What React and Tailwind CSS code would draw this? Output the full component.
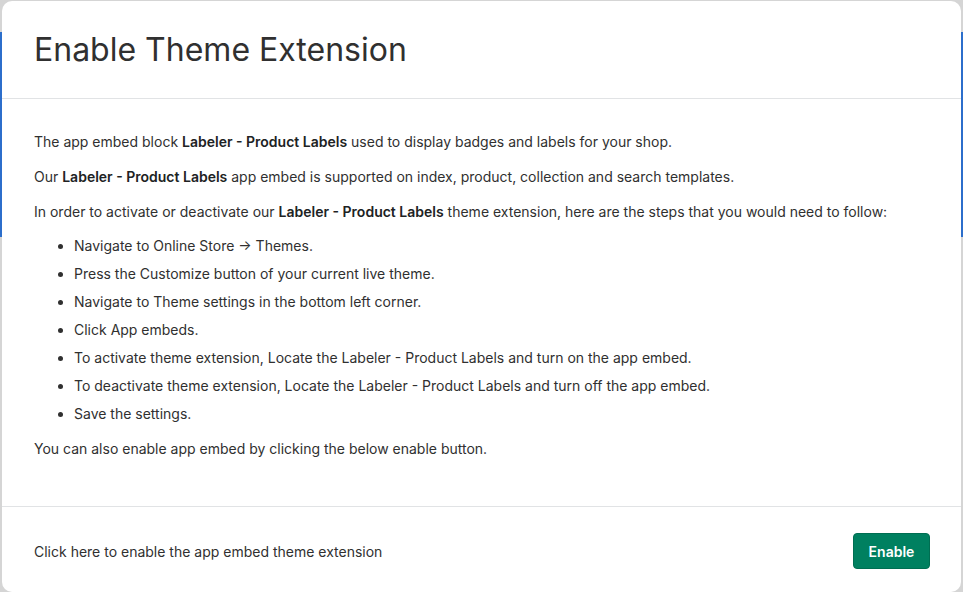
export default function App() {
  const B = ({ children }) => <span className="font-semibold text-[#202223]">{children}</span>;
  const items = [
    "Navigate to Online Store \u2192 Themes.",
    "Press the Customize button of your current live theme.",
    "Navigate to Theme settings in the bottom left corner.",
    "Click App embeds.",
    "To activate theme extension, Locate the Labeler - Product Labels and turn on the app embed.",
    "To deactivate theme extension, Locate the Labeler - Product Labels and turn off the app embed.",
    "Save the settings.",
  ];
  return (
    <div
      className="relative w-[963px] h-[592px] overflow-hidden bg-[#d5d5d5]"
      style={{ fontFamily: "Inter, 'Noto Sans', sans-serif" }}
    >
      <div className="absolute left-0 top-[32px] w-[3px] h-[205px] bg-[#2c6ecb]" />
      <div className="absolute right-0 top-[32px] w-[3px] h-[205px] bg-[#2c6ecb]" />
      <div className="absolute left-[2px] top-[1px] w-[959px] h-[591px] bg-white rounded-[10px] flex flex-col">
        <div className="h-[98px] shrink-0 border-b border-[#e1e3e5] flex items-center pl-[32px]">
          <h1 className="text-[32px] leading-[38px] font-normal text-[#303030]">
            Enable Theme Extension
          </h1>
        </div>
        <div className="flex-1 px-[32px] pt-[33px] text-[14px] leading-[20px] text-[#303030]">
          <p className="mb-[15px]">
            The app embed block <B>Labeler - Product Labels</B> used to display badges and labels for your shop.
          </p>
          <p className="mb-[15px]">
            Our <B>Labeler - Product Labels</B> app embed is supported on index, product, collection and search templates.
          </p>
          <p className="mb-[14px]">
            In order to activate or deactivate our <B>Labeler - Product Labels</B> theme extension, here are the steps that you would need to follow:
          </p>
          <ul className="list-disc pl-[40px] flex flex-col gap-[8px] mb-[15px]">
            {items.map((t) => (
              <li key={t}>{t}</li>
            ))}
          </ul>
          <p>You can also enable app embed by clicking the below enable button.</p>
        </div>
        <div className="h-[86px] shrink-0 border-t border-[#e1e3e5] flex items-center justify-between pl-[32px] pr-[31px] pt-[3px]">
          <span className="text-[14px] text-[#303030]">Click here to enable the app embed theme extension</span>
          <button className="w-[77px] h-[36px] rounded-[4px] bg-[#008060] text-white text-[14px] font-semibold border border-[#006e52]">
            Enable
          </button>
        </div>
      </div>
    </div>
  );
}
